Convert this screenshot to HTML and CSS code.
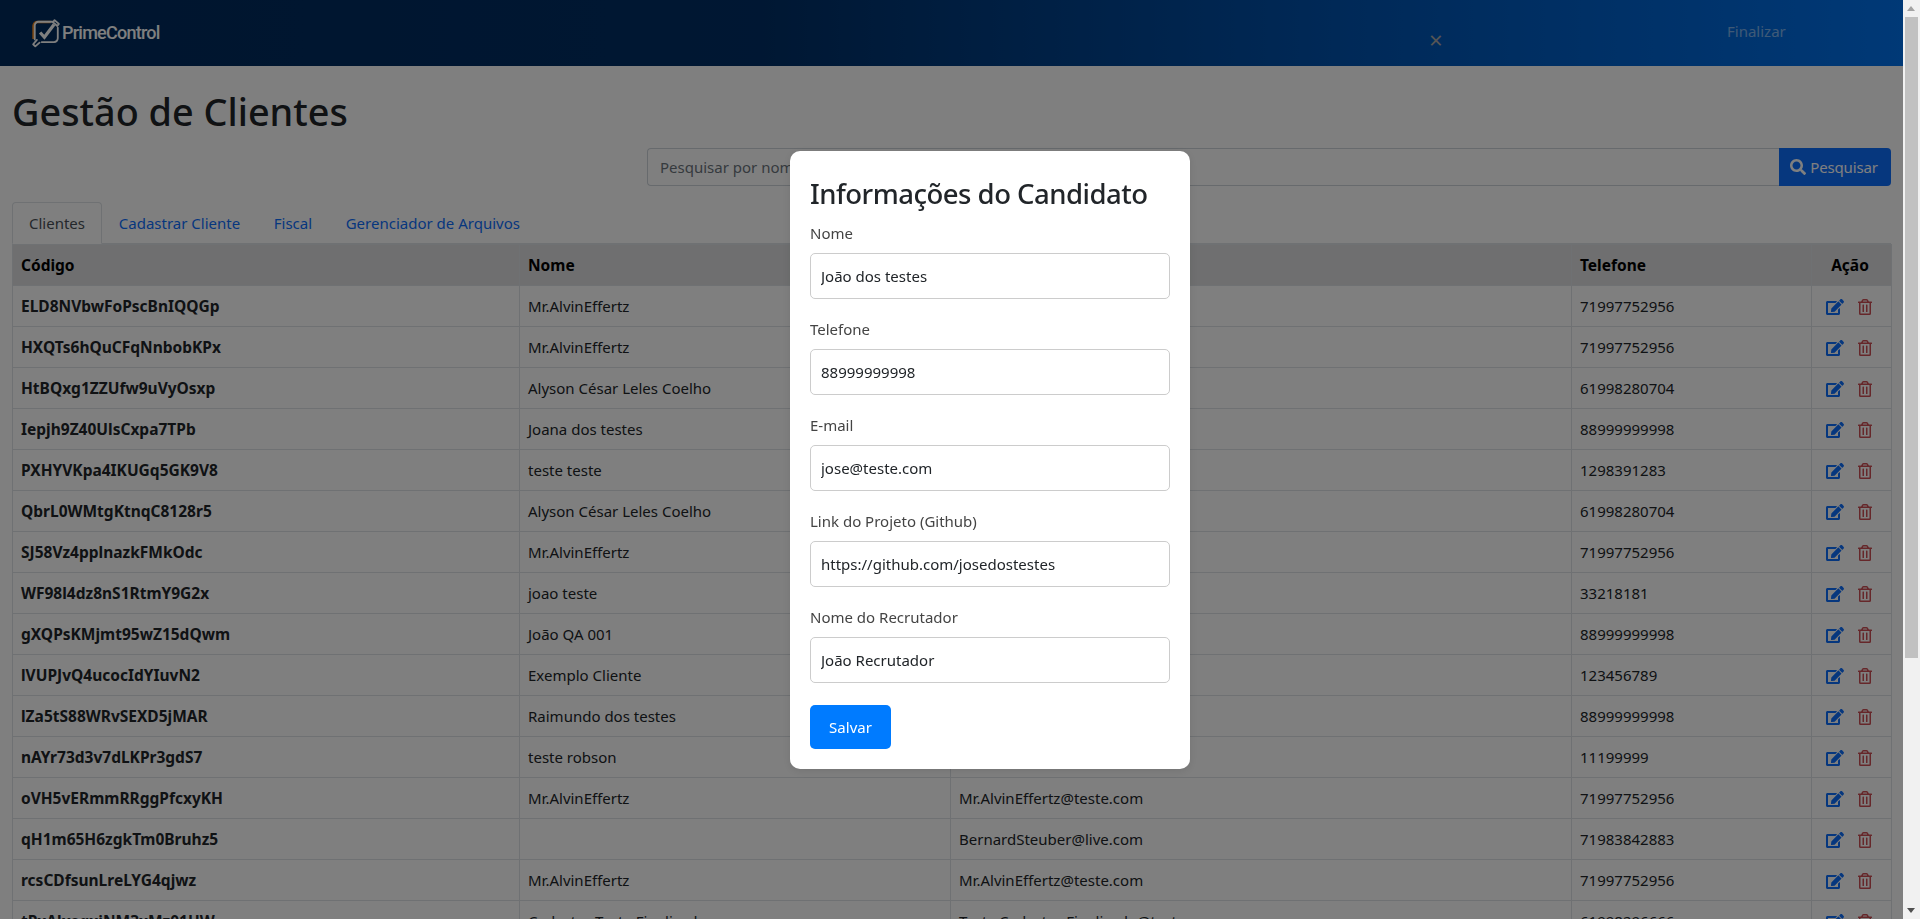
FILE: index.html
```html
<!DOCTYPE html>
<html lang="pt-BR">
<head>
<meta charset="utf-8">
<title>Gestão de Clientes</title>
<link rel="stylesheet" href="styles.css">
</head>
<body>
<svg class="sprite" aria-hidden="true">
  <symbol id="i-edit" viewBox="0 0 576 512"><path d="M402.6 83.2l90.2 90.2c3.8 3.8 3.8 10 0 13.8L274.4 405.6l-92.8 10.3c-12.4 1.4-22.9-9.1-21.5-21.5l10.3-92.8L388.8 83.2c3.8-3.8 10-3.8 13.8 0zm162-22.9l-48.8-48.8c-15.2-15.2-39.9-15.2-55.2 0l-35.4 35.4c-3.8 3.8-3.8 10 0 13.8l90.2 90.2c3.8 3.8 10 3.8 13.8 0l35.4-35.4c15.2-15.3 15.2-40 0-55.2zM384 346.2V448H64V128h229.8c3.2 0 6.2-1.3 8.5-3.5l40-40c7.6-7.6 2.2-20.5-8.5-20.5H48C21.5 64 0 85.5 0 112v352c0 26.5 21.5 48 48 48h352c26.5 0 48-21.5 48-48V306.2c0-10.7-12.9-16-20.5-8.5l-40 40c-2.2 2.3-3.5 5.3-3.5 8.5z"/></symbol>
  <symbol id="i-trash" viewBox="0 0 448 512"><path d="M268 416h24a12 12 0 0 0 12-12V188a12 12 0 0 0-12-12h-24a12 12 0 0 0-12 12v216a12 12 0 0 0 12 12zM432 80h-82.41l-34-56.7A48 48 0 0 0 274.41 0H173.59a48 48 0 0 0-41.16 23.3L98.41 80H16A16 16 0 0 0 0 96v16a16 16 0 0 0 16 16h16v336a48 48 0 0 0 48 48h288a48 48 0 0 0 48-48V128h16a16 16 0 0 0 16-16V96a16 16 0 0 0-16-16zM171.84 50.91A6 6 0 0 1 177 48h94a6 6 0 0 1 5.15 2.91L293.61 80H154.39zM368 464H80V128h288zm-212-48h24a12 12 0 0 0 12-12V188a12 12 0 0 0-12-12h-24a12 12 0 0 0-12 12v216a12 12 0 0 0 12 12z"/></symbol>
</svg>
<div class="shell">
  <div class="page">
    <header class="topbar">
      <div class="brand">
        <svg class="brand-mark" viewBox="0 0 28 28" aria-hidden="true">
          <path class="mark-orange" d="M19 3.5H6.5A3.5 3.5 0 0 0 3 7v12.5"/>
          <path class="mark-line" d="M20 3.5H7A3.5 3.5 0 0 0 3.500 7v13M10 22.500h11.500A3.500 3.500 0 0 0 25 19V9"/>
          <path class="mark-line" d="M8 23l-4 3.500-2-2 3.500-4M22 2l4 3.500-1.500 2-4-3.500z"/>
          <path class="mark-check" d="M8.500 13.500l4 4.500 9-12"/>
        </svg>
        <span class="brand-name">PrimeControl</span>
      </div>
      <span class="topbar-close">×</span>
      <span class="topbar-finish">Finalizar</span>
    </header>
    <main class="content">
      <h1 class="title">Gestão de Clientes</h1>
      <form class="search">
        <input class="search-input" type="text" placeholder="Pesquisar por nome ou e-mail">
        <button class="search-btn" type="button">
          <svg class="ico ico-search" viewBox="0 0 512 512" aria-hidden="true"><path d="M505 442.700L405.300 343c-4.500-4.500-10.600-7-17-7H372c27.600-35.300 44-79.700 44-128C416 93.100 322.900 0 208 0S0 93.100 0 208s93.100 208 208 208c48.300 0 92.700-16.400 128-44v16.300c0 6.400 2.500 12.500 7 17l99.700 99.700c9.400 9.400 24.600 9.400 33.900 0l28.300-28.300c9.400-9.400 9.400-24.600.1-34zM208 336c-70.700 0-128-57.200-128-128 0-70.700 57.200-128 128-128 70.700 0 128 57.200 128 128 0 70.700-57.200 128-128 128z"/></svg>
          Pesquisar
        </button>
      </form>
      <nav class="tabs">
        <a class="tab tab-active">Clientes</a>
        <a class="tab">Cadastrar Cliente</a>
        <a class="tab">Fiscal</a>
        <a class="tab">Gerenciador de Arquivos</a>
      </nav>
      <table class="grid">
        <thead>
          <tr><th class="c-code">Código</th><th class="c-name">Nome</th><th class="c-mail">E-mail</th><th class="c-tel">Telefone</th><th class="c-act">Ação</th></tr>
        </thead>
        <tbody>
          <tr><th>ELD8NVbwFoPscBnIQQGp</th><td>Mr.AlvinEffertz</td><td>Mr.AlvinEffertz@teste.com</td><td>71997752956</td><td><div class="acts"><svg class="ico ico-edit"><use href="#i-edit"/></svg><svg class="ico ico-trash"><use href="#i-trash"/></svg></div></td></tr>
          <tr><th>HXQTs6hQuCFqNnbobKPx</th><td>Mr.AlvinEffertz</td><td>Mr.AlvinEffertz@teste.com</td><td>71997752956</td><td><div class="acts"><svg class="ico ico-edit"><use href="#i-edit"/></svg><svg class="ico ico-trash"><use href="#i-trash"/></svg></div></td></tr>
          <tr><th>HtBQxg1ZZUfw9uVyOsxp</th><td>Alyson César Leles Coelho</td><td>alyson@teste.com</td><td>61998280704</td><td><div class="acts"><svg class="ico ico-edit"><use href="#i-edit"/></svg><svg class="ico ico-trash"><use href="#i-trash"/></svg></div></td></tr>
          <tr><th>Iepjh9Z40UlsCxpa7TPb</th><td>Joana dos testes</td><td>joana@teste.com</td><td>88999999998</td><td><div class="acts"><svg class="ico ico-edit"><use href="#i-edit"/></svg><svg class="ico ico-trash"><use href="#i-trash"/></svg></div></td></tr>
          <tr><th>PXHYVKpa4IKUGq5GK9V8</th><td>teste teste</td><td>teste@teste.com</td><td>1298391283</td><td><div class="acts"><svg class="ico ico-edit"><use href="#i-edit"/></svg><svg class="ico ico-trash"><use href="#i-trash"/></svg></div></td></tr>
          <tr><th>QbrL0WMtgKtnqC8128r5</th><td>Alyson César Leles Coelho</td><td>alyson@teste.com</td><td>61998280704</td><td><div class="acts"><svg class="ico ico-edit"><use href="#i-edit"/></svg><svg class="ico ico-trash"><use href="#i-trash"/></svg></div></td></tr>
          <tr><th>SJ58Vz4pplnazkFMkOdc</th><td>Mr.AlvinEffertz</td><td>Mr.AlvinEffertz@teste.com</td><td>71997752956</td><td><div class="acts"><svg class="ico ico-edit"><use href="#i-edit"/></svg><svg class="ico ico-trash"><use href="#i-trash"/></svg></div></td></tr>
          <tr><th>WF98l4dz8nS1RtmY9G2x</th><td>joao teste</td><td>joao@teste.com</td><td>33218181</td><td><div class="acts"><svg class="ico ico-edit"><use href="#i-edit"/></svg><svg class="ico ico-trash"><use href="#i-trash"/></svg></div></td></tr>
          <tr><th>gXQPsKMjmt95wZ15dQwm</th><td>João QA 001</td><td>joao.qa@teste.com</td><td>88999999998</td><td><div class="acts"><svg class="ico ico-edit"><use href="#i-edit"/></svg><svg class="ico ico-trash"><use href="#i-trash"/></svg></div></td></tr>
          <tr><th>lVUPJvQ4ucocIdYIuvN2</th><td>Exemplo Cliente</td><td>cliente@teste.com</td><td>123456789</td><td><div class="acts"><svg class="ico ico-edit"><use href="#i-edit"/></svg><svg class="ico ico-trash"><use href="#i-trash"/></svg></div></td></tr>
          <tr><th>lZa5tS88WRvSEXD5jMAR</th><td>Raimundo dos testes</td><td>raimundo@teste.com</td><td>88999999998</td><td><div class="acts"><svg class="ico ico-edit"><use href="#i-edit"/></svg><svg class="ico ico-trash"><use href="#i-trash"/></svg></div></td></tr>
          <tr><th>nAYr73d3v7dLKPr3gdS7</th><td>teste robson</td><td>robson@teste.com</td><td>11199999</td><td><div class="acts"><svg class="ico ico-edit"><use href="#i-edit"/></svg><svg class="ico ico-trash"><use href="#i-trash"/></svg></div></td></tr>
          <tr><th>oVH5vERmmRRggPfcxyKH</th><td>Mr.AlvinEffertz</td><td>Mr.AlvinEffertz@teste.com</td><td>71997752956</td><td><div class="acts"><svg class="ico ico-edit"><use href="#i-edit"/></svg><svg class="ico ico-trash"><use href="#i-trash"/></svg></div></td></tr>
          <tr><th>qH1m65H6zgkTm0Bruhz5</th><td></td><td>BernardSteuber@live.com</td><td>71983842883</td><td><div class="acts"><svg class="ico ico-edit"><use href="#i-edit"/></svg><svg class="ico ico-trash"><use href="#i-trash"/></svg></div></td></tr>
          <tr><th>rcsCDfsunLreLYG4qjwz</th><td>Mr.AlvinEffertz</td><td>Mr.AlvinEffertz@teste.com</td><td>71997752956</td><td><div class="acts"><svg class="ico ico-edit"><use href="#i-edit"/></svg><svg class="ico ico-trash"><use href="#i-trash"/></svg></div></td></tr>
          <tr><th>tPxAlxeqxiNM3xMz01UW</th><td>Cadastro Teste Finalizado</td><td>Teste.Cadastro.Finalizado@teste.com</td><td>61998296666</td><td><div class="acts"><svg class="ico ico-edit"><use href="#i-edit"/></svg><svg class="ico ico-trash"><use href="#i-trash"/></svg></div></td></tr>
        </tbody>
      </table>
    </main>
  </div>
  <aside class="scrollbar" aria-hidden="true">
    <span class="sb-arrow sb-up"></span>
    <span class="sb-thumb"></span>
    <span class="sb-arrow sb-down"></span>
  </aside>
</div>
<div class="overlay">
  <section class="modal">
    <h2 class="modal-title">Informações do Candidato</h2>
    <div class="field"><label class="field-label">Nome</label><input class="field-input" type="text" value="João dos testes"></div>
    <div class="field"><label class="field-label">Telefone</label><input class="field-input" type="text" value="88999999998"></div>
    <div class="field"><label class="field-label">E-mail</label><input class="field-input" type="text" value="jose@teste.com"></div>
    <div class="field"><label class="field-label">Link do Projeto (Github)</label><input class="field-input" type="text" value="https://github.com/josedostestes"></div>
    <div class="field"><label class="field-label">Nome do Recrutador</label><input class="field-input" type="text" value="João Recrutador"></div>
    <button class="save-btn" type="button">Salvar</button>
  </section>
</div>
</body>
</html>
```
FILE: styles.css
```css
* { box-sizing: border-box; }
html, body { margin: 0; height: 919px; overflow: hidden; }
body {
  font-family: "Noto Sans", "Open Sans", sans-serif;
  font-size: 15px;
  line-height: 24px;
  color: #212529;
  background: #fff;
}
.sprite { display: none; }
.shell { display: flex; height: 919px; }
.page { width: 1903px; flex: none; overflow: hidden; }

.topbar {
  display: flex;
  align-items: center;
  height: 66px;
  padding-left: 31px;
  background: linear-gradient(90deg, #002a5c 0%, #002f66 40%, #0052ae 70%, #0072ee 100%);
}
.brand { display: flex; align-items: center; gap: 1px; width: 1397px; }
.brand-mark { width: 30px; height: 30px; fill: none; }
.mark-orange { stroke: #f08a24; stroke-width: 2.400; transform: translate(-.6px, .2px); }
.mark-line { stroke: #fff; stroke-width: 1.700; stroke-linecap: round; stroke-linejoin: round; }
.mark-check { stroke: #fff; stroke-width: 3; stroke-linejoin: miter; }
.brand-name {
  font-family: Roboto, sans-serif;
  font-weight: 500;
  font-size: 18px;
  letter-spacing: -.75px;
  color: #fff;
}
.topbar-close {
  width: 299px;
  padding: 13px 0 0 1px;
  font-size: 24px;
  color: #aaa;
}
.topbar-finish { margin-top: -5px; color: rgba(255, 255, 255, .5); }

.content { padding: 22px 12px 0; }
.title { margin: 0 0 12px; font-size: 37.800px; font-weight: 500; line-height: 48px; }
.search { display: flex; width: 1244px; height: 38px; margin-left: auto; }
.search-input {
  flex: 1;
  min-width: 0;
  padding: 0 12px;
  font: inherit;
  color: #212529;
  border: 1px solid #ced4da;
  border-right: 0;
  border-radius: 4px 0 0 4px;
  background: #fff;
}
.search-input::placeholder { color: #6c757d; opacity: 1; }
.search-btn {
  display: flex;
  align-items: center;
  justify-content: center;
  gap: 4px;
  width: 112px;
  padding-left: 4px;
  font: inherit;
  letter-spacing: -.15px;
  color: #fff;
  background: #0d6efd;
  border: 0;
  border-radius: 0 4px 4px 0;
}
.ico { display: block; fill: currentColor; }
.ico-search { width: 16px; height: 16px; }

.tabs {
  display: flex;
  height: 42px;
  margin-top: 16px;
  border-bottom: 1px solid #dee2e6;
}
.tab { padding: 9px 16.800px 0; color: #0d6efd; }
.tab-active {
  height: 42px;
  color: #495057;
  background: #fff;
  border: 1px solid #dee2e6;
  border-bottom-color: #fff;
  border-radius: 4px 4px 0 0;
  padding: 8px 16px 0;
}

.grid { width: 1879px; table-layout: fixed; border-collapse: collapse; }
.grid th, .grid td {
  height: 41px;
  padding: 8px;
  text-align: left;
  font-weight: 400;
  border: 1px solid #dee2e6;
  white-space: nowrap;
}
.grid th { font-size: 15.500px; font-weight: 700; }
.grid thead th { color: #000; background: #dedfe0; }
.c-code { width: 507px; }
.c-name { width: 431px; }
.c-mail { width: 621px; }
.c-tel { width: 240px; }
.c-act { width: 80px; }
.grid .c-act { padding-right: 11px; text-align: center; }
.acts { display: flex; gap: 14px; padding-left: 6px; }
.ico-edit { width: 18px; height: 16px; margin-top: 2px; color: #0d6efd; }
.ico-trash { width: 14px; height: 16px; margin-top: 2px; color: #cc4f55; }

.scrollbar {
  position: relative;
  flex: none;
  width: 17px;
  height: 919px;
  background: #f1f1f1;
}
.sb-thumb {
  display: block;
  width: 13px;
  height: 641px;
  margin: 17px 0 0 2px;
  background: #c1c1c1;
}
.sb-arrow { position: absolute; left: 4px; width: 0; height: 0; border-left: 4.500px solid transparent; border-right: 4.500px solid transparent; }
.sb-up { top: 6px; border-bottom: 5px solid #a3a3a3; }
.sb-down { bottom: 6px; border-top: 5px solid #505050; }

.overlay {
  position: fixed;
  top: 0;
  left: 0;
  right: 17px;
  bottom: 0;
  display: flex;
  align-items: center;
  justify-content: center;
  padding-left: 77px;
  background: rgba(0, 0, 0, .5);
}
.modal {
  width: 400px;
  height: 618px;
  padding: 21px 20px 20px;
  background: #fff;
  border-radius: 10px;
  box-shadow: 0 2px 10px rgba(0, 0, 0, .1);
}
.modal-title { margin: 0 0 6px; font-size: 27.500px; font-weight: 500; line-height: 44px; letter-spacing: -.5px; color: #212529; }
.field { margin-bottom: 19px; }
.field-label { display: block; margin-bottom: 9px; line-height: 22px; color: #444; }
.field-input {
  display: block;
  width: 100%;
  height: 46px;
  padding: 0 10px;
  font: inherit;
  color: #212529;
  background: #fff;
  border: 1px solid #ccc;
  border-radius: 5px;
}
.save-btn {
  display: block;
  width: 81px;
  height: 44px;
  margin-top: 22px;
  font: inherit;
  color: #fff;
  background: #007bff;
  border: 0;
  border-radius: 5px;
}
```
